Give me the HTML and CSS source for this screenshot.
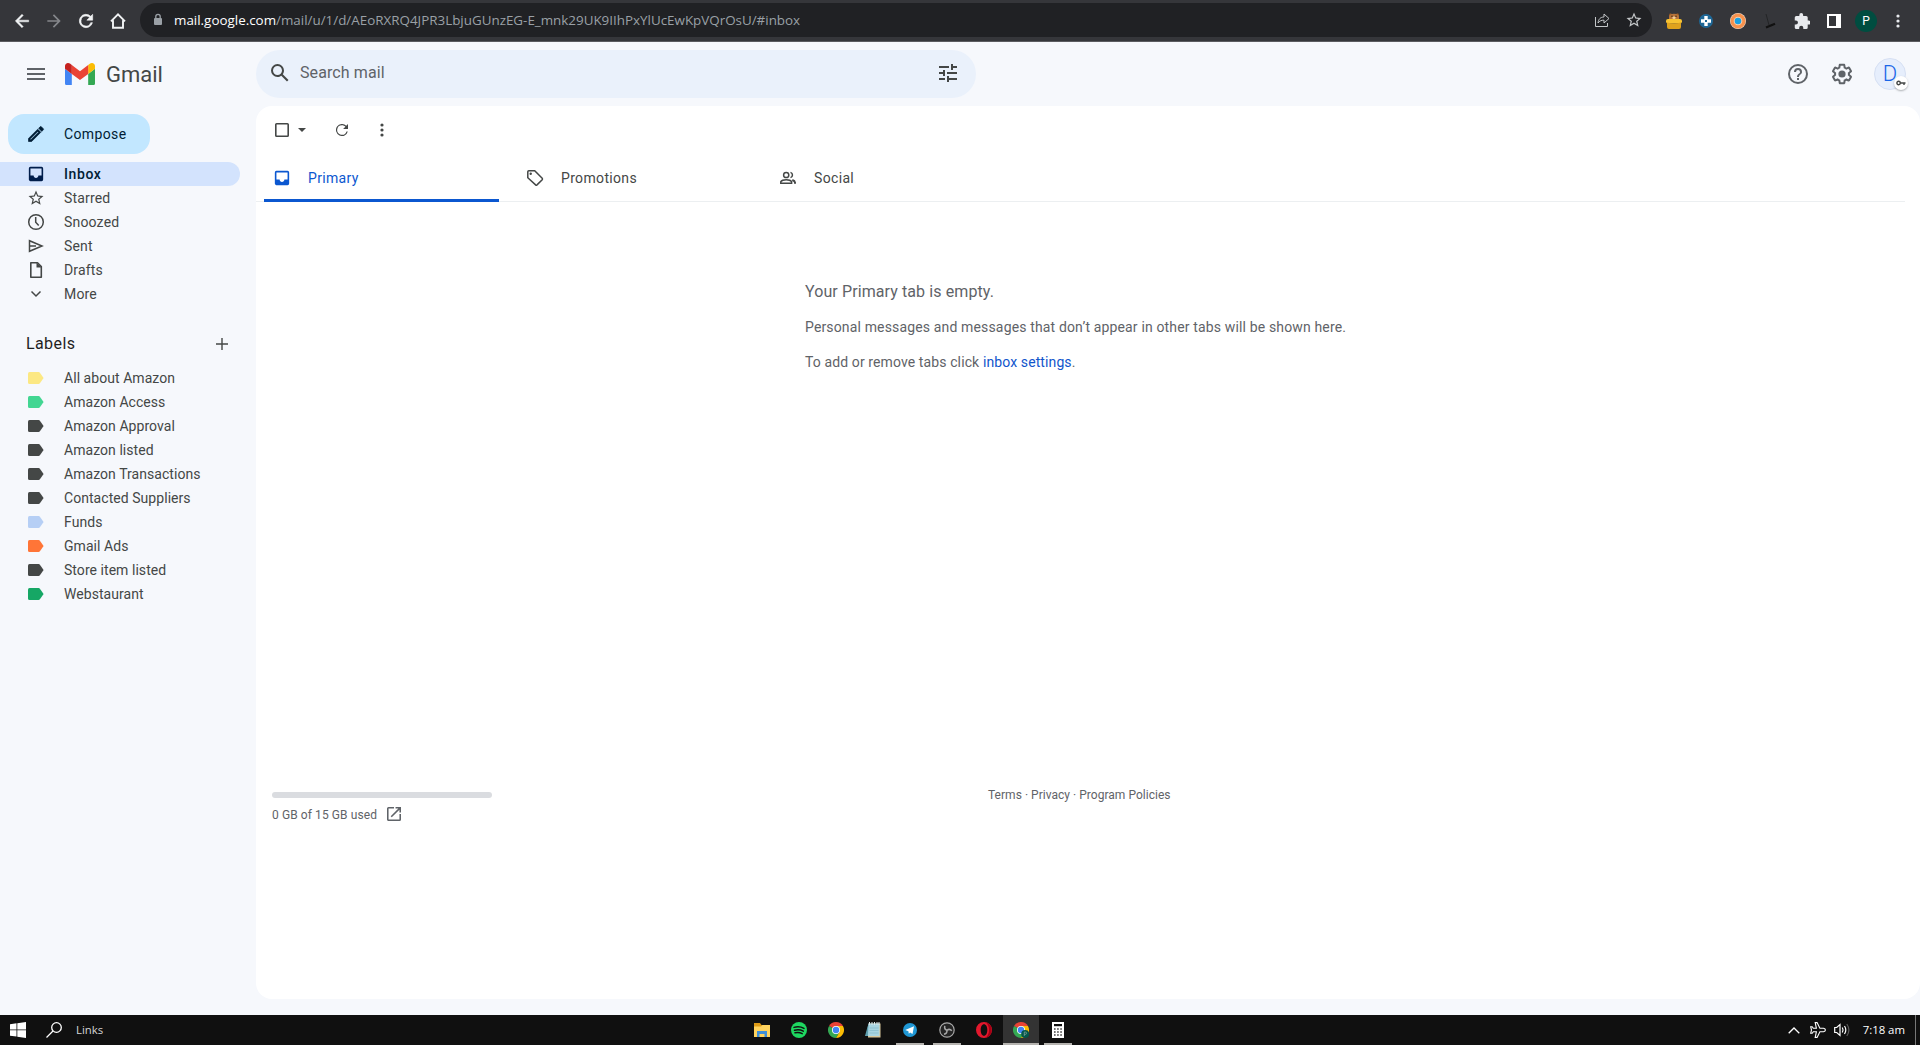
FILE: index.html
```html
<!DOCTYPE html>
<html lang="en">
<head>
<meta charset="utf-8">
<title>Inbox - Gmail</title>
<link rel="stylesheet" href="styles.css">
</head>
<body>
<header class="browser">
  <nav class="browser-nav">
    <svg class="i20" viewBox="0 0 24 24"><path d="M20 11H7.8l5.6-5.6L12 4l-8 8 8 8 1.4-1.4L7.8 13H20z" fill="#f1f3f4" stroke="#f1f3f4" stroke-width=".6"/></svg>
    <svg class="i20" viewBox="0 0 24 24"><path d="M4 11h12.2l-5.6-5.6L12 4l8 8-8 8-1.4-1.4 5.6-5.6H4z" fill="#85878b"/></svg>
    <svg class="i20" viewBox="0 0 24 24"><path d="M17.65 6.35A8 8 0 1 0 19.73 14h-2.08A6 6 0 1 1 12 6c1.66 0 3.14.69 4.22 1.78L13 11h7V4z" fill="#f1f3f4" stroke="#f1f3f4" stroke-width=".7"/></svg>
    <svg class="i20" viewBox="0 0 24 24"><path d="M3.600 12.500L12 4l8.400 8.500M6 11v9h12v-9" fill="none" stroke="#f1f3f4" stroke-width="2.300"/></svg>
  </nav>
  <div class="omnibox">
    <svg class="lock" viewBox="0 0 10 14"><rect x="1" y="5" width="8" height="7" rx="1" fill="#9aa0a6"/><path d="M2.800 6V3.500a2.200 2.200 0 0 1 4.400 0V6" fill="none" stroke="#9aa0a6" stroke-width="1.300"/></svg>
    <span class="url"><b>mail.google.com</b>/mail/u/1/d/AEoRXRQ4JPR3LbjuGUnzEG-E_mnk29UK9IIhPxYlUcEwKpVQrOsU/#inbox</span>
    <svg class="i16" viewBox="0 0 16 16" fill="none" stroke="#c4c7c9"><path d="M1.500 5v9.500h12V11M4 11c.5-4 2.500-6 6-6V2l5 4.500-5 4.500V8.200C7.500 8 5.500 9 4 11z"/></svg>
    <svg class="i18" viewBox="0 0 24 24"><path d="M22 9.240l-7.190-.62L12 2 9.190 8.630 2 9.240l5.460 4.730L5.820 21 12 17.270 18.180 21l-1.630-7.030zM12 15.400l-3.760 2.270 1-4.280-3.320-2.880 4.380-.38L12 6.100l1.710 4.040 4.380.38-3.320 2.880 1 4.280z" fill="#c4c7c9"/></svg>
  </div>
  <div class="extensions">
    <svg class="i16" viewBox="0 0 16 16"><circle cx="4.500" cy="1.800" r="1.500" fill="#8d5524"/><circle cx="11.500" cy="1.800" r="1.500" fill="#8d5524"/><path d="M3 8V3.500Q3 .8 8 .8t5 2.700V8z" fill="#b8743a"/><circle cx="6" cy="3.300" r=".7" fill="#34200c"/><circle cx="10" cy="3.300" r=".7" fill="#34200c"/><ellipse cx="8" cy="4.800" rx="1.700" ry="1.300" fill="#f1cf9b"/><rect y="6" width="16" height="4.500" rx="2" fill="#f7c332"/><path d="M1 9.500q7 2 14 0V14q0 2-2 2H3q-2 0-2-2z" fill="#dfa21d"/></svg>
    <svg class="i16" viewBox="0 0 16 16"><circle cx="8" cy="8" r="7" fill="#1e6796"/><path d="M6.300 3h3.400v3.300H13v3.400H9.700V13H6.300V9.700H3V6.300h3.300z" fill="#fff"/><path d="M7 7h2v2H7z" fill="#1e6796"/></svg>
    <svg class="i16" viewBox="0 0 16 16"><circle cx="8" cy="8" r="8" fill="#f4dcc8"/><circle cx="8" cy="8" r="5.500" fill="none" stroke="#f6914d" stroke-width="4"/><circle cx="8" cy="8" r="4.300" fill="#fbd0ab"/><circle cx="8" cy="8" r="3.300" fill="#1a9fe0"/></svg>
    <svg class="i16" viewBox="0 0 16 16"><path d="M4 1l3 11" stroke="#1e1f21" stroke-width=".8"/><path d="M4 14.500l9-3.800" stroke="#111" stroke-width="2.200"/></svg>
    <svg class="i16" viewBox="1 1 21 21"><path d="M20.500 11H19V7a2 2 0 0 0-2-2h-4V3.500a2.500 2.500 0 0 0-5 0V5H4a2 2 0 0 0-2 2v3.800h1.500a2.700 2.700 0 0 1 0 5.400H2V20c0 1.100.9 2 2 2h3.800v-1.500a2.700 2.700 0 0 1 5.400 0V22H17a2 2 0 0 0 2-2v-4h1.500a2.500 2.500 0 0 0 0-5z" fill="#e8eaed"/></svg>
    <svg class="i16" viewBox="0 0 16 16"><path d="M1 1h14v14H1zM3 3v10h7V3z" fill="#fff" fill-rule="evenodd"/></svg>
    <span class="profile">P</span>
    <svg class="i16" viewBox="0 0 16 16" fill="#e8eaed"><circle cx="8" cy="3" r="1.600"/><circle cx="8" cy="8" r="1.600"/><circle cx="8" cy="13" r="1.600"/></svg>
  </div>
</header>

<div class="app">
  <aside class="sidebar">
    <div class="brand">
      <svg class="burger" viewBox="0 0 18 12"><path d="M0 1h18M0 6h18M0 11h18" stroke="#5f6368" stroke-width="2"/></svg>
      <svg class="logo" viewBox="52 42 88 66"><path fill="#4285f4" d="M58 108h14V74L52 59v43c0 3.320 2.690 6 6 6"/><path fill="#34a853" d="M120 108h14c3.320 0 6-2.690 6-6V59l-20 15"/><path fill="#fbbc04" d="M120 48v26l20-15v-8c0-7.420-8.470-11.650-14.400-7.200"/><path fill="#ea4335" d="M72 74V48l24 18 24-18v26L96 92"/><path fill="#c5221f" d="M52 51v8l20 15V48l-5.600-4.200c-5.940-4.450-14.400-.22-14.400 7.200"/></svg>
      <span class="brand-name">Gmail</span>
    </div>
    <button class="compose"><svg class="i20" viewBox="0 0 24 24"><path d="M14.100 9l.9.900L5.900 19H5v-.9zM17.700 3c-.25 0-.51.1-.7.290l-1.830 1.830 3.750 3.750 1.830-1.830a1 1 0 0 0 0-1.410l-2.340-2.340c-.2-.2-.45-.29-.71-.29zm-3.600 3.200L3 17.250V21h3.750L17.800 9.940z" fill="#001d35" stroke="#001d35" stroke-width=".8"/></svg>Compose</button>
    <ul class="nav">
      <li class="active"><svg class="i18" viewBox="0 0 24 24"><path d="M19 3H5a2 2 0 0 0-2 2v14c0 1.100.9 2 2 2h14a2 2 0 0 0 2-2V5a2 2 0 0 0-2-2zm0 11h-4c0 1.660-1.350 3-3 3s-3-1.340-3-3H5V5h14z" transform="matrix(1.060 0 0 1.060 -.72 -.72)" fill="#001d4b"/></svg>Inbox</li>
      <li><svg class="i18" viewBox="0 0 24 24"><path d="M22 9.240l-7.190-.62L12 2 9.190 8.630 2 9.240l5.460 4.730L5.820 21 12 17.270 18.180 21l-1.630-7.030zM12 15.400l-3.760 2.270 1-4.280-3.320-2.880 4.380-.38L12 6.100l1.710 4.040 4.380.38-3.320 2.880 1 4.280z" fill="#444746"/></svg>Starred</li>
      <li><svg class="i18" viewBox="0 0 18 18" fill="none" stroke="#444746" stroke-width="1.500"><circle cx="9" cy="9" r="7.300"/><path d="M8.700 4v5.200l3 3.200"/></svg>Snoozed</li>
      <li><svg class="i18" viewBox="0 0 18 18" fill="none" stroke="#444746" stroke-width="1.500"><path d="M2.500 3.700v10.600L15 9zM2.500 9H9"/></svg>Sent</li>
      <li><svg class="i18" viewBox="0 0 18 18"><path d="M3.800 1.800h6.700l3.800 3.800v10.600H3.800z" fill="none" stroke="#444746" stroke-width="1.600" stroke-linejoin="round"/><path d="M9.500 1.500v5h5z" fill="#444746"/></svg>Drafts</li>
      <li><svg class="i18" viewBox="0 0 18 18" fill="none" stroke="#444746" stroke-width="1.500"><path d="M4.500 6.500L9 11l4.500-4.500"/></svg>More</li>
    </ul>
    <div class="labels-head"><h2>Labels</h2><svg class="plus" viewBox="0 0 12 12"><path d="M6 0v12M0 6h12" stroke="#444746" stroke-width="1.400"/></svg></div>
    <svg class="defs"><symbol id="tag" viewBox="0 0 16 12"><path d="M1.500 0h9.100q.8 0 1.300.7L15.600 6l-3.700 5.300q-.5.700-1.300.7H1.500Q0 12 0 10.500v-9Q0 0 1.500 0z"/></symbol></svg>
    <ul class="nav labels">
      <li><svg class="tag yellow"><use href="#tag"/></svg>All about Amazon</li>
      <li><svg class="tag mint"><use href="#tag"/></svg>Amazon Access</li>
      <li><svg class="tag"><use href="#tag"/></svg>Amazon Approval</li>
      <li><svg class="tag"><use href="#tag"/></svg>Amazon listed</li>
      <li><svg class="tag"><use href="#tag"/></svg>Amazon Transactions</li>
      <li><svg class="tag"><use href="#tag"/></svg>Contacted Suppliers</li>
      <li><svg class="tag blue"><use href="#tag"/></svg>Funds</li>
      <li><svg class="tag orange"><use href="#tag"/></svg>Gmail Ads</li>
      <li><svg class="tag"><use href="#tag"/></svg>Store item listed</li>
      <li><svg class="tag green"><use href="#tag"/></svg>Webstaurant</li>
    </ul>
  </aside>

  <div class="content">
    <div class="topbar">
      <div class="search">
        <svg class="i24" viewBox="0 0 24 24"><path d="M20.490 19l-5.730-5.730C15.530 12.200 16 10.910 16 9.500A6.500 6.500 0 1 0 9.500 16c1.410 0 2.700-.47 3.770-1.240L19 20.490zM5 9.500C5 7.010 7.010 5 9.500 5S14 7.010 14 9.500 11.990 14 9.500 14 5 11.990 5 9.500z" fill="#444746"/></svg>
        <span class="placeholder">Search mail</span>
        <svg class="i24" viewBox="0 0 24 24"><path d="M3 17v2h6v-2zM3 5v2h10V5zm10 16v-2h8v-2h-8v-2h-2v6zM7 9v2H3v2h4v2h2V9zm14 4v-2H11v2zm-6-4h2V7h4V5h-4V3h-2z" fill="#444746"/></svg>
      </div>
      <div class="account">
        <svg class="i24" viewBox="0 0 24 24"><path d="M11 18h2v-2h-2zm1-16a10 10 0 1 0 0 20 10 10 0 0 0 0-20zm0 18a8 8 0 1 1 0-16 8 8 0 0 1 0 16zm0-14a4 4 0 0 0-4 4h2a2 2 0 1 1 4 0c0 2-3 1.750-3 5h2c0-2.250 3-2.500 3-5a4 4 0 0 0-4-4z" fill="#5f6368"/></svg>
        <svg class="i24" viewBox="0 0 24 24"><path d="M13.850 22.250h-3.700c-.74 0-1.360-.54-1.450-1.270l-.27-1.890c-.27-.14-.53-.29-.79-.46l-1.800.72c-.7.26-1.470-.03-1.810-.65L2.200 15.530c-.35-.66-.2-1.440.36-1.880l1.530-1.190c-.01-.15-.02-.3-.02-.46 0-.15.010-.31.020-.46l-1.520-1.190c-.59-.45-.74-1.260-.37-1.880l1.850-3.190c.34-.62 1.110-.9 1.790-.63l1.810.73c.26-.17.52-.32.780-.46l.27-1.910c.09-.7.71-1.250 1.440-1.250h3.700c.74 0 1.360.54 1.450 1.270l.27 1.890c.27.140.53.290.79.460l1.800-.72c.71-.26 1.480.03 1.820.65l1.840 3.180c.36.660.2 1.440-.36 1.880l-1.520 1.190c.01.150.02.3.020.460s-.01.310-.02.460l1.520 1.190c.56.450.72 1.230.37 1.860l-1.860 3.220c-.34.620-1.110.9-1.800.63l-1.800-.72c-.26.170-.52.320-.78.460l-.27 1.910c-.1.680-.72 1.220-1.460 1.220zm-3.230-2h2.760l.37-2.550.53-.22c.44-.18.880-.44 1.340-.78l.45-.34 2.380.96 1.380-2.400-2.030-1.580.07-.56c.03-.26.060-.51.060-.78s-.03-.53-.06-.78l-.07-.56 2.030-1.580-1.390-2.400-2.390.96-.45-.35c-.42-.32-.87-.58-1.330-.77l-.52-.22-.37-2.550h-2.760l-.37 2.550-.53.210c-.44.190-.88.440-1.340.79l-.45.330-2.380-.95-1.390 2.390 2.030 1.580-.07.560a7 7 0 0 0 0 1.570l.07.560-2.030 1.580 1.380 2.400 2.390-.96.450.35c.43.330.86.580 1.330.77l.53.220z" fill="#5f6368"/><circle cx="12" cy="12" r="3.600" fill="#5f6368"/></svg>
        <div class="avatar">D<span class="key"><svg viewBox="0 0 10 6"><circle cx="2.600" cy="3" r="1.700" fill="none" stroke="#444746" stroke-width="1.400"/><path d="M4 3h5.500M8 3v2" stroke="#444746" stroke-width="1.400"/></svg></span></div>
      </div>
    </div>

    <main class="panel">
      <div class="actions">
        <svg class="box" viewBox="0 0 14 14"><rect x=".8" y=".8" width="12.400" height="12.400" rx=".8" fill="none" stroke="#444746" stroke-width="1.600"/></svg>
        <svg class="caret" viewBox="0 0 8 4"><path d="M0 0h8L4 4z" fill="#444746"/></svg>
        <svg class="refresh" viewBox="4 4 16 16"><path d="M17.650 6.350A8 8 0 1 0 19.730 14h-1.700A6.400 6.400 0 1 1 12 5.600c1.780 0 3.370.74 4.500 1.900L13.500 10.500H20V4z" fill="#444746"/></svg>
        <svg class="i16" viewBox="0 0 16 16" fill="#444746"><circle cx="8" cy="3" r="1.600"/><circle cx="8" cy="8" r="1.600"/><circle cx="8" cy="13" r="1.600"/></svg>
      </div>
      <div class="tabs">
        <div class="tab selected"><svg class="i18" viewBox="0 0 24 24"><path d="M19 3H5a2 2 0 0 0-2 2v14c0 1.100.9 2 2 2h14a2 2 0 0 0 2-2V5a2 2 0 0 0-2-2zm0 11h-4c0 1.660-1.350 3-3 3s-3-1.340-3-3H5V5h14z" transform="matrix(1.060 0 0 1.060 -.72 -.72)" fill="#0b57d0"/></svg>Primary</div>
        <div class="tab"><svg class="i18" viewBox="0 0 18 18"><path d="M1.800 2.800q0-1 1-1h5.900L16.200 9.300q.6.700 0 1.400l-5.200 5.200q-.7.600-1.400 0L1.800 8.700z" fill="none" stroke="#444746" stroke-width="1.500"/><circle cx="4.700" cy="4.700" r="1.200" fill="#444746"/></svg>Promotions</div>
        <div class="tab"><svg class="i18" viewBox="0 0 18 18" fill="none" stroke="#444746" stroke-width="1.500"><circle cx="7.200" cy="6" r="2.600"/><path d="M1.800 14.200v-1.500q1.200-2 5.400-2t5.400 2v1.500zM11.500 3.400a2.700 2.700 0 0 1 0 5.200"/><path d="M13.300 11q2.500.8 2.700 2.500v1.300" stroke-width="2"/></svg>Social</div>
      </div>
      <section class="empty">
        <div class="message">
          <h1>Your Primary tab is empty.</h1>
          <p>Personal messages and messages that don’t appear in other tabs will be shown here.</p>
          <p class="settings">To add or remove tabs click <a>inbox settings</a>.</p>
        </div>
      </section>
      <footer class="foot">
        <div class="storage">
          <div class="meter"></div>
          <div class="usage"><span>0 GB of 15 GB used</span><svg viewBox="3 3 18 18"><path d="M19 19H5V5h7V3H5a2 2 0 0 0-2 2v14c0 1.100.9 2 2 2h14a2 2 0 0 0 2-2v-7h-2zM14 3v2h3.590l-9.830 9.830 1.410 1.410L19 6.410V10h2V3z" fill="#5f6368"/></svg></div>
        </div>
        <div class="legal">Terms · Privacy · Program Policies</div>
      </footer>
    </main>
  </div>
</div>

<footer class="taskbar">
  <div class="start">
    <svg class="i16" viewBox="0 0 16 16"><path d="M0 2.200L6.500 1.300v6.200H0zM7.300 1.200L16 0v7.500H7.300zM0 8.300h6.500v6.300L0 13.800zM7.300 8.300H16V16l-8.700-1.300z" fill="#fff"/></svg>
    <svg class="i16" viewBox="0 0 16 16" fill="none" stroke="#fff" stroke-width="1.300"><circle cx="10.500" cy="5.500" r="4.800"/><path d="M7 9L.5 15.500"/></svg>
    <span>Links</span>
  </div>
  <div class="apps">
    <span class="task"><svg class="i16" viewBox="0 0 16 16"><path d="M0 1h6l1.500 2H16v3H0z" fill="#dd9a16"/><path d="M0 4.500h7L8.500 3H16v12H0z" fill="#ffd35e"/><path d="M3 15V9h10v6h-2.500v-3h-5v3z" fill="#3f8fd8"/></svg></span>
    <span class="task"><svg class="i16" viewBox="0 0 16 16"><circle cx="8" cy="8" r="8" fill="#1ed760"/><path d="M3 5.400q5.500-1.500 10 1M3.500 8.200q4.800-1.300 8.800.9M4 10.800q4-1 7.200.8" fill="none" stroke="#101010" stroke-width="1.500" stroke-linecap="round"/></svg></span>
    <span class="task"><svg class="i16" viewBox="0 0 16 16"><path d="M8 8L1.070 4A8 8 0 0 1 14.930 4z" fill="#ea4335"/><path d="M1.070 4A8 8 0 0 0 8 16l3.500-6-3.500-2z" fill="#34a853"/><path d="M14.930 4A8 8 0 0 1 8 16l3.500-6L8 4z" fill="#fbbc04"/><circle cx="8" cy="8" r="4" fill="#fff"/><circle cx="8" cy="8" r="3.200" fill="#4285f4"/></svg></span>
    <span class="task"><svg class="i16" viewBox="0 0 16 16"><path d="M3.500 1.500H15.500V15.500H3z" fill="#d9c89b"/><path d="M3.500 1.500H14.500V14H1z" fill="#a8d5e2"/><path d="M3.500 1.500L0 14h3z" fill="#5e9fae"/><path d="M4.500 0v3M7 0v3M9.500 0v3M12 0v3M14 0v3" stroke="#dfe9ec"/><path d="M4.500 6h9M4.500 8.500h9M4.500 11h9" stroke="#7db7c8" stroke-width=".6"/></svg></span>
    <span class="task open"><svg class="i16" viewBox="0 0 16 16"><circle cx="8" cy="8" r="7" fill="#2097d4"/><path d="M3.200 8l8.800-3.700-1.500 7.800-2.400-1.700-1.300 1.300-.4-2.500z" fill="#fff"/></svg></span>
    <span class="task open"><svg class="i16" viewBox="0 0 16 16" fill="none" stroke="#a7a7a7"><circle cx="8" cy="8" r="7.200" fill="#242424" stroke-width="1.200"/><path d="M8 8.300Q5 7.300 5.800 3.800M8 8.300Q10.500 6.200 12.800 8.800M8 8.300Q8.200 11.800 5 12.300" stroke-width="1.500"/></svg></span>
    <span class="task"><svg class="i16" viewBox="0 0 16 16"><path d="M8 0a8 8 0 1 0 0 16A8 8 0 0 0 8 0zm0 2.200c2 0 3.300 2.400 3.300 5.800S10 13.800 8 13.800 4.700 11.400 4.700 8 6 2.200 8 2.200z" fill="#e3182d"/><path d="M9.500 15.800A8 8 0 0 0 9.500.2C12 2 13 5 13 8s-1 6-3.500 7.800z" fill="#a70014"/></svg></span>
    <span class="task open current"><svg class="i16" viewBox="0 0 16 16"><path d="M8 8L1.070 4A8 8 0 0 1 14.930 4z" fill="#ea4335"/><path d="M1.070 4A8 8 0 0 0 8 16l3.500-6-3.500-2z" fill="#34a853"/><path d="M14.930 4A8 8 0 0 1 8 16l3.500-6L8 4z" fill="#fbbc04"/><circle cx="8" cy="8" r="4" fill="#fff"/><circle cx="8" cy="8" r="3.200" fill="#4285f4"/><circle cx="12.200" cy="12" r="4" fill="#04564a"/><path d="M11.300 14v-4h1q1.200 0 1.200 1.200t-1.200 1.200h-1" fill="none" stroke="#86aaa4" stroke-width=".7"/></svg></span>
    <span class="task open"><svg class="i16" viewBox="0 0 16 16"><path d="M2 0h12v16H2z" fill="#fff"/><path d="M4 2h8v2.200H4z" fill="#101010"/><path d="M4.200 7h8M4.200 10h8M4.200 13h8" stroke="#101010" stroke-width="1.300" stroke-dasharray="1.300 1.800"/></svg></span>
  </div>
  <div class="tray">
    <svg class="chev" viewBox="0 0 12 7"><path d="M.7 6.300L6 1l5.300 5.300" fill="none" stroke="#fff" stroke-width="1.300"/></svg>
    <svg class="i16" viewBox="0 0 16 16"><path d="M5.200.6h1.900L9.900 6.300h3.600q1.900.4 1.900 1.700t-1.900 1.700H9.900l-2.800 5.700H5.200l1.200-5.700H3.300L2.200 11.300H.7L1.500 8 .7 4.700h1.500l1.100 1.600h3.100z" fill="none" stroke="#fff" stroke-width="1.100"/></svg>
    <svg class="i16" viewBox="0 0 16 16" fill="none" stroke="#fff" stroke-width="1.200"><path d="M.7 5.500h2L6 2.500v11l-3.300-3h-2zM8.300 5.500q1.500 2.500 0 5M10.500 4q2.600 4 0 8"/><path d="M12.800 2q4.200 6 0 12" stroke="#5a5a5a"/></svg>
    <span class="clock">7:18 am</span>
  </div>
</footer>
</body>
</html>
```
FILE: styles.css
```css
* { box-sizing: border-box; }
body {
  margin: 0;
  height: 1045px;
  display: flex;
  flex-direction: column;
  overflow: hidden;
  background: #f6f8fc;
  color: #444746;
  font: 14px/20px Roboto, "Liberation Sans", sans-serif;
}
svg { display: block; flex: none; }
ul, h1, h2, p { margin: 0; padding: 0; list-style: none; font-weight: 400; }
.i16 { width: 16px; height: 16px; }
.i18 { width: 18px; height: 18px; }
.i20 { width: 20px; height: 20px; }
.i24 { width: 24px; height: 24px; }
.defs { width: 0; height: 0; }

/* Browser toolbar */
.browser {
  height: 42px;
  flex: none;
  display: flex;
  align-items: center;
  background: #35363a;
  border-bottom: 1px solid #5b5c60;
}
.browser-nav { display: flex; gap: 12px; width: 140px; padding-left: 12px; }
.omnibox {
  width: 1512px;
  height: 34px;
  margin-bottom: 1px;
  border-radius: 17px;
  background: #202124;
  display: flex;
  align-items: center;
  padding: 0 9px 0 13px;
}
.lock { width: 10px; height: 14px; }
.url {
  flex: 1;
  margin-left: 11px;
  color: #9aa0a6;
  font: 13.4px/20px "Open Sans", sans-serif;
}
.url b { color: #fff; font-weight: 400; }
.omnibox .i18 { margin-left: 15px; }
.extensions { display: flex; align-items: center; gap: 16px; margin-left: 14px; }
.profile {
  width: 22px;
  height: 22px;
  margin: 0 -3px;
  border-radius: 50%;
  background: #004d40;
  color: #fff;
  font-size: 12px;
  line-height: 22px;
  text-align: center;
}

/* Sidebar */
.app { flex: 1; display: flex; min-height: 0; }
.sidebar { width: 256px; flex: none; }
.brand { height: 64px; display: flex; align-items: center; padding-left: 27px; }
.burger { width: 18px; height: 12px; }
.logo { width: 30px; height: 22.5px; margin-left: 20px; }
.brand-name { margin-left: 11px; font-size: 22px; padding-top: 1px; }
.compose {
  display: flex;
  align-items: center;
  gap: 18px;
  width: 142px;
  height: 40px;
  margin: 8px 0 8px 8px;
  padding: 0 0 0 18px;
  border: 0;
  border-radius: 16px;
  background: #c2e7ff;
  color: #001d35;
  font: 14px/20px Roboto, sans-serif;
  letter-spacing: .38px;
}
.nav li {
  width: 240px;
  height: 24px;
  display: flex;
  align-items: center;
  gap: 19px;
  padding-left: 27px;
  color: #444746;
  letter-spacing: .18px;
}
.nav .active {
  background: #d3e3fd;
  border-radius: 0 12px 12px 0;
  color: #001d35;
  font-weight: 500;
  letter-spacing: .6px;
}
.labels-head {
  height: 60px;
  display: flex;
  align-items: center;
  justify-content: space-between;
  padding: 15px 28px 0 26px;
}
.labels-head h2 { font-size: 16px; color: #1f1f1f; letter-spacing: .4px; line-height: 20px; }
.plus { width: 12px; height: 12px; }
.nav.labels li { gap: 20px; padding-left: 28px; letter-spacing: .05px; }
.tag { width: 16px; height: 12px; fill: #444746; }
.yellow { fill: #fce883; }
.mint { fill: #42d692; }
.blue { fill: #b6cff5; }
.orange { fill: #ff7537; }
.green { fill: #16a765; }

/* Header */
.content { flex: 1; }
.topbar { height: 64px; display: flex; align-items: center; justify-content: space-between; padding-right: 14px; }
.search {
  width: 720px;
  height: 48px;
  border-radius: 24px;
  background: #eaf1fb;
  display: flex;
  align-items: center;
  padding: 0 16px 0 12px;
}
.search .i24 { margin-bottom: 2px; }
.placeholder { flex: 1; margin: 0 0 3px 8px; font-size: 16px; color: #5f6368; letter-spacing: .1px; }
.account { display: flex; align-items: center; gap: 20px; }
.avatar {
  position: relative;
  width: 32px;
  height: 32px;
  border: 1px solid #d6e0f3;
  border-radius: 50%;
  background: #e6eefc;
  color: #1a66e8;
  font: 300 22px/30px Roboto, sans-serif;
  text-align: center;
}
.key {
  position: absolute;
  right: -3px;
  bottom: -1px;
  width: 14px;
  height: 14px;
  border-radius: 50%;
  background: #fff;
  box-shadow: 0 1px 2px rgba(60, 64, 67, .4);
  display: grid;
  place-items: center;
}
.key svg { width: 10px; height: 6px; }

/* Mail panel */
.panel {
  height: 893px;
  border-radius: 16px;
  background: #fff;
  display: flex;
  flex-direction: column;
}
.actions { height: 48px; display: flex; align-items: center; padding-left: 19px; }
.box { width: 14px; height: 14px; }
.caret { width: 8px; height: 4px; margin-left: 9px; }
.refresh { width: 12px; height: 12px; margin-left: 30px; margin-right: 26px; }
.tabs { height: 48px; width: 1649px; display: flex; padding-left: 8px; border-bottom: 1px solid #eceff1; }
.tab {
  width: 253px;
  height: 48px;
  display: flex;
  align-items: center;
  gap: 17px;
  padding-left: 9px;
  color: #444746;
  letter-spacing: .34px;
}
.selected {
  width: 235px;
  margin-right: 18px;
  padding-top: 3px;
  border-bottom: 3px solid #0b57d0;
  border-radius: 2px 2px 0 0;
  color: #0b57d0;
}
.empty { height: 587px; display: flex; padding: 80px 0 0 549px; color: #5f6368; }
.message h1 { font-size: 16px; line-height: 20px; letter-spacing: .1px; }
.message p { margin-top: 15px; letter-spacing: .15px; }
.message .settings { letter-spacing: .11px; }
.message a { color: #1155cc; }
.foot { display: flex; padding: 3px 0 0 16px; color: #5f6368; font-size: 12px; }
.meter { width: 220px; height: 6px; border-radius: 3px; background: #dadce0; }
.usage { display: flex; align-items: center; gap: 10px; margin-top: 7px; letter-spacing: .09px; }
.usage svg { width: 14px; height: 14px; margin-bottom: 2px; }
.legal { margin: -7px 0 0 496px; letter-spacing: .03px; }

/* Taskbar */
.taskbar {
  height: 30px;
  flex: none;
  display: flex;
  background: #101010;
  color: #eee;
  font: 11.4px/30px "Open Sans", sans-serif;
}
.start { width: 744px; display: flex; align-items: center; padding-left: 10px; }
.start .i16 + .i16 { margin-left: 20px; }
.start span { margin-left: 14px; color: #d5d5d5; }
.apps { display: flex; gap: 1px; flex: 1; }
.task { width: 36px; display: grid; place-items: center; }
.open { background: linear-gradient(#b5b3af, #b5b3af) center bottom / 28px 2px no-repeat; }
.current { background-color: #333; background-size: 100% 2px; }
.tray { display: flex; align-items: center; padding-right: 10px; border-right: 1px solid #777; margin-right: 4px; }
.chev { width: 12px; height: 7px; margin-right: 10px; }
.tray .i16 + .i16 { margin-left: 8px; }
.clock { margin-left: 13px; color: #fff; }
```
